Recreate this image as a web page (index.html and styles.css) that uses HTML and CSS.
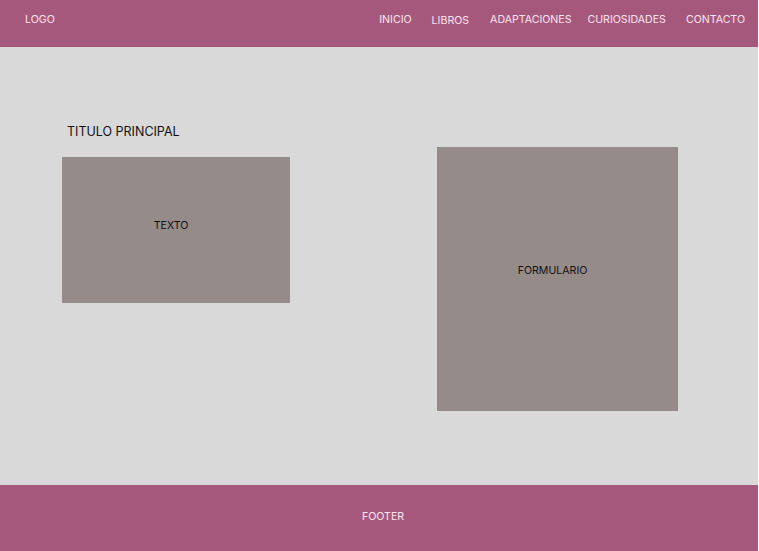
FILE: index.html
```html
<!DOCTYPE html>
<html lang="es">
<head>
<meta charset="utf-8">
<title>Layout</title>
<link rel="stylesheet" href="styles.css">
</head>
<body>
<div class="page">
  <header class="header">
    <div class="logo">LOGO</div>
    <nav class="nav">
      <a class="nav-item n1">INICIO</a>
      <a class="nav-item n2">LIBROS</a>
      <a class="nav-item n3">ADAPTACIONES</a>
      <a class="nav-item n4">CURIOSIDADES</a>
      <a class="nav-item n5">CONTACTO</a>
    </nav>
  </header>
  <main class="main">
    <section class="left">
      <h1 class="title">TITULO PRINCIPAL</h1>
      <div class="box text-box">TEXTO</div>
    </section>
    <section class="right">
      <div class="box form-box">FORMULARIO</div>
    </section>
  </main>
  <footer class="footer">FOOTER</footer>
</div>
</body>
</html>
```

FILE: styles.css
```css
html, body {
  margin: 0;
  padding: 0;
  background: #ffffff;
}
body {
  font-family: Inter, "Noto Sans", sans-serif;
}
.page {
  width: 758px;
  height: 551px;
  display: flex;
  flex-direction: column;
  background: #d9d9d9;
}
.header {
  height: 47px;
  flex: none;
  background: #a6587c;
  display: flex;
  align-items: center;
  justify-content: space-between;
  padding: 0 13px 0 25px;
  box-sizing: border-box;
  color: #fbe4ef;
  font-size: 10.6px;
}
.logo {
  margin-top: -9px;
}
.nav {
  display: flex;
  align-items: center;
  margin-top: -9px;
}
.nav-item {
  color: #fbe4ef;
  text-decoration: none;
}
.n2 { margin-left: 20px; margin-top: 2px; }
.n3 { margin-left: 21px; }
.n4 { margin-left: 16px; }
.n5 { margin-left: 20px; }
.main {
  flex: 1;
  display: flex;
  align-items: flex-start;
}
.left {
  margin-left: 62px;
  padding-top: 77px;
}
.title {
  margin: 0 0 17px 5px;
  font-size: 12.5px;
  line-height: 16px;
  font-weight: 400;
  color: #111111;
}
.box {
  background: #958b89;
  display: flex;
  align-items: center;
  justify-content: center;
  color: #111111;
  font-size: 10.6px;
  box-sizing: border-box;
  padding-right: 10px;
}
.text-box {
  width: 228px;
  height: 146px;
  padding-bottom: 10px;
}
.right {
  margin-left: 147px;
  padding-top: 100px;
}
.form-box {
  width: 241px;
  height: 264px;
  padding-bottom: 18px;
}
.footer {
  height: 66px;
  flex: none;
  background: #a6587c;
  color: #fbe4ef;
  font-size: 10.6px;
  display: flex;
  align-items: center;
  justify-content: center;
  padding-left: 8px;
  padding-bottom: 4px;
  box-sizing: border-box;
}
```
